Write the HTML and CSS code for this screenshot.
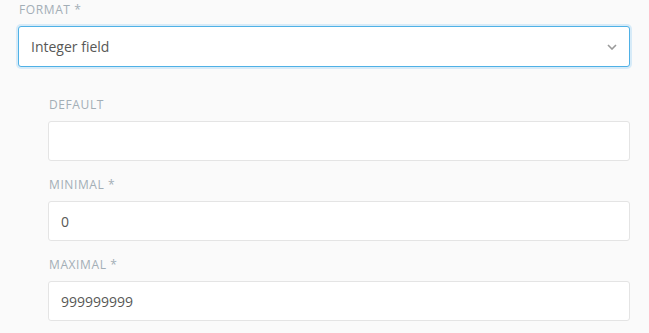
FILE: index.html
```html
<!DOCTYPE html>
<html lang="en">

<head>
    <meta charset="UTF-8">
    <meta name="viewport" content="width=device-width, initial-scale=1.0">
    <title>Integer field</title>
    <link rel="stylesheet" href="styles.css">
</head>

<body>
    <div class="form">
        <div class="form-group">
            <label class="label" for="format">Format <span>*</span></label>
            <div class="select-wrap">
                <select id="format" class="control select focused">
                    <option>Integer field</option>
                </select>
                <svg class="chevron" width="10" height="6" viewBox="0 0 10 6">
                    <path d="M1 1 L5 5 L9 1" fill="none" stroke="#9a9a9a" stroke-width="1.6"/>
                </svg>
            </div>
        </div>

        <div class="sub-fields">
            <div class="form-group">
                <label class="label" for="default">Default</label>
                <input type="text" id="default" class="control">
            </div>
            <div class="form-group">
                <label class="label" for="min">Minimal <span>*</span></label>
                <input type="text" id="min" class="control" value="0">
            </div>
            <div class="form-group">
                <label class="label" for="max">Maximal <span>*</span></label>
                <input type="text" id="max" class="control" value="999999999">
            </div>
        </div>
    </div>
</body>

</html>
```

FILE: styles.css
```css
body {
    font-family: "Open Sans", Arial, sans-serif;
    background-color: #fafafa;
    margin: 0;
    padding: 0;
    color: #585856;
}

.form {
    padding: 2px 19px 0 18px;
}

.form-group {
    display: flex;
    flex-direction: column;
}

.label {
    font-size: 12px;
    line-height: 16px;
    letter-spacing: 0.6px;
    text-transform: uppercase;
    color: #a3aeb6;
    padding-left: 1px;
    margin-bottom: 8px;
}

.control {
    box-sizing: border-box;
    width: 100%;
    height: 40px;
    padding: 0 12px;
    font-family: inherit;
    font-size: 14px;
    color: #585856;
    background: white;
    border: 1px solid #e4e4e4;
    border-radius: 3px;
    outline: none;
}

.select-wrap {
    position: relative;
}

.select {
    appearance: none;
    height: 41px;
}

.focused {
    border-color: #4fb1e6;
    box-shadow: 0 0 0 2px #d7ebf8;
}

.chevron {
    position: absolute;
    right: 13px;
    top: 18px;
}

.sub-fields {
    padding: 30px 0 0 30px;
    display: flex;
    flex-direction: column;
    gap: 16px;
}
```
